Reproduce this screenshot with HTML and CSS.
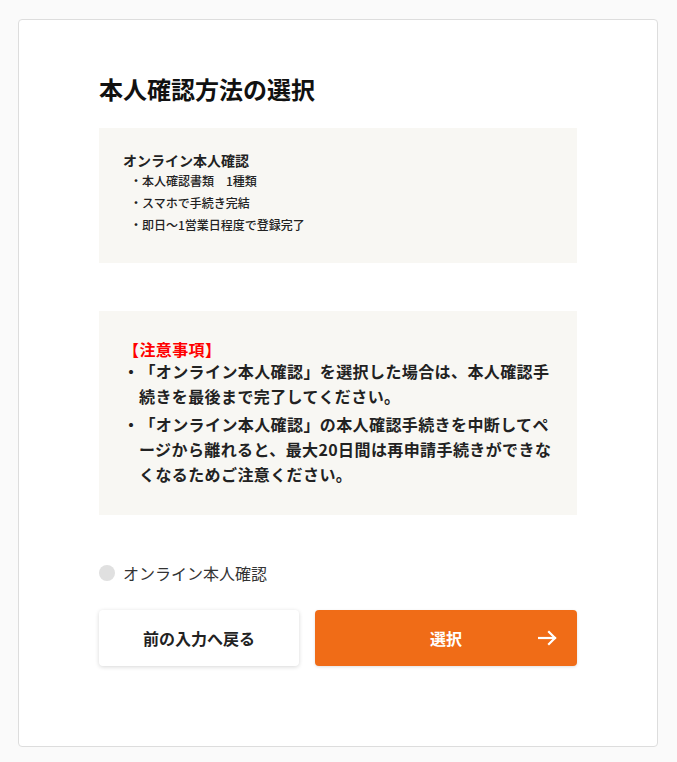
FILE: index.html
```html
<!DOCTYPE html>
<html lang="ja">
<head>
    <meta charset="UTF-8">
    <meta name="viewport" content="width=device-width, initial-scale=1.0">
    <title>本人確認方法の選択</title>
    <link rel="stylesheet" href="styles.css">
</head>
<body>
    <div class="card">
        <h1 class="page-title">本人確認方法の選択</h1>

        <div class="info-box method-box">
            <div class="method-title">オンライン本人確認</div>
            <ul class="method-list">
                <li>・本人確認書類　1種類</li>
                <li>・スマホで手続き完結</li>
                <li>・即日〜1営業日程度で登録完了</li>
            </ul>
        </div>

        <div class="info-box notice-box">
            <div class="notice-title">【注意事項】</div>
            <ul class="notice-list">
                <li>・「オンライン本人確認」を選択した場合は、本人確認手続きを最後まで完了してください。</li>
                <li>・「オンライン本人確認」の本人確認手続きを中断してページから離れると、最大20日間は再申請手続きができなくなるためご注意ください。</li>
            </ul>
        </div>

        <label class="radio-row">
            <span class="radio-mark"></span>
            <span class="radio-label">オンライン本人確認</span>
        </label>

        <div class="actions">
            <button class="btn btn-back">前の入力へ戻る</button>
            <button class="btn btn-select">
                <span></span>
                <span class="btn-text">選択</span>
                <svg class="btn-arrow" width="20" height="16" viewBox="0 0 20 16" fill="none" stroke="#fff" stroke-width="2.2" stroke-linecap="square">
                    <path d="M1 8h16"/>
                    <path d="M11 2l6 6-6 6"/>
                </svg>
            </button>
        </div>
    </div>
</body>
</html>
```

FILE: styles.css
```css
body {
    margin: 0;
    padding: 19px 0 16px;
    background-color: #fafafa;
    font-family: "Noto Sans CJK JP", "Noto Sans", sans-serif;
    color: #222;
    text-spacing-trim: space-all;
}

.card {
    margin: 0 19px 0 18px;
    padding: 52px 80px 80px;
    background-color: #fff;
    border: 1px solid #ddd;
    border-radius: 4px;
}

.page-title {
    margin: 0 0 22px;
    font-size: 24px;
    line-height: 34px;
    font-weight: bold;
    color: #111;
}

.info-box {
    background-color: #f8f7f3;
}

.method-box {
    padding: 22px 24px 27px;
}

.method-title {
    font-size: 14px;
    line-height: 20px;
    font-weight: bold;
}

.method-list {
    list-style: none;
    margin: 0;
    padding: 0 0 0 7px;
    font-size: 12px;
    line-height: 22px;
    font-weight: 500;
}

.notice-box {
    margin-top: 48px;
    padding: 28px 24px;
}

.notice-title {
    color: #ff0000;
    font-size: 16px;
    line-height: 20px;
    font-weight: bold;
    letter-spacing: 0.4px;
}

.notice-list {
    list-style: none;
    margin: 0;
    padding: 0;
    font-size: 16px;
    line-height: 25px;
    font-weight: bold;
    letter-spacing: 0.4px;
    line-break: loose;
}

.notice-list li {
    padding-left: 16px;
    text-indent: -16px;
}

.notice-list li + li {
    margin-top: 3px;
}

.radio-row {
    display: flex;
    align-items: center;
    gap: 8px;
    margin-top: 46px;
    height: 24px;
    cursor: pointer;
}

.radio-mark {
    width: 16px;
    height: 16px;
    border-radius: 50%;
    background-color: #e0e0e0;
}

.radio-label {
    font-size: 16px;
    color: #333;
}

.actions {
    display: flex;
    gap: 16px;
    margin-top: 25px;
}

.btn {
    height: 56px;
    border: none;
    border-radius: 4px;
    font-family: inherit;
    font-size: 16px;
    font-weight: bold;
    cursor: pointer;
}

.btn-back {
    width: 200px;
    background-color: #fff;
    color: #222;
    box-shadow: 0 1px 4px rgba(0, 0, 0, 0.16);
}

.btn-select {
    flex-grow: 1;
    display: grid;
    grid-template-columns: 1fr auto 1fr;
    align-items: center;
    padding: 0 19px;
    background-color: #f06c17;
    color: #fff;
    box-shadow: 0 1px 3px rgba(0, 0, 0, 0.12);
}

.btn-arrow {
    justify-self: end;
}
```
